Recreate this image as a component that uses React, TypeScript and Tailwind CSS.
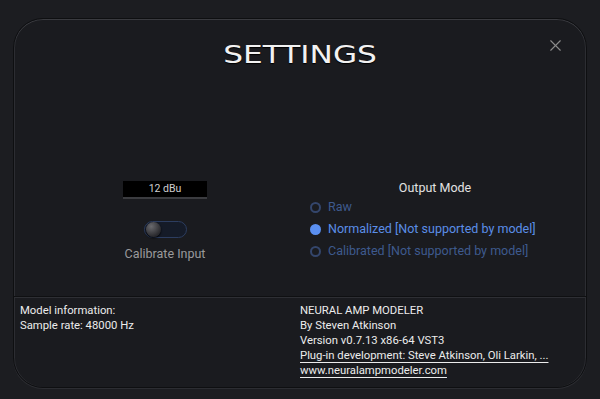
import { X } from 'lucide-react'

const options = [
  { label: 'Raw', active: false },
  { label: 'Normalized [Not supported by model]', active: true },
  { label: 'Calibrated [Not supported by model]', active: false },
]

export default function App() {
  return (
    <div className="w-[600px] h-[399px] bg-[#1c1d21] pt-[18px] px-[13px] pb-[11px] font-['Roboto',sans-serif]">
      <div className="relative h-full flex flex-col rounded-[30px] border border-[#0e0f11] bg-[#1a1b1f] shadow-[inset_0_1px_0_#3a3b40,inset_1px_0_0_#2c2d32,inset_-1px_0_0_#2c2d32,0_1px_0_#2c2d32]">
        <div className="h-[70px] pt-[24px] flex justify-center">
          <h1 className="text-[24px] leading-none text-[#f2f2f2] scale-x-[1.3] font-['DejaVu_Sans',sans-serif] [text-shadow:0_1px_1px_#000]">SETTINGS</h1>
        </div>
        <button className="absolute right-[21px] top-[17px] text-[#8c8c8c]">
          <X size={19} strokeWidth={1.4} />
        </button>

        <div className="flex-1 flex">
          <div className="w-[284px] pl-[18px] pt-[92px] flex flex-col items-center">
            <div className="w-[84px] h-[18px] bg-black border-b-2 border-[#3b3c40] flex items-center justify-center text-[10.5px] text-[#cfcfcf]">12 dBu</div>
            <div className="mt-[22px] w-[43px] h-[17px] rounded-full bg-[#151b28] border border-[#2c3d60] flex items-center px-[1px]">
              <div className="w-[15px] h-[15px] rounded-full bg-[radial-gradient(circle_at_35%_30%,#6a6a6e,#2a2a2e_70%)] shadow-[0_1px_2px_#000]" />
            </div>
            <p className="mt-[7px] text-[12.5px] text-[#9a9a9c]">Calibrate Input</p>
          </div>
          <div className="flex-1 pt-[91px]">
            <p className="text-center pr-[14px] text-[12.5px] leading-[16px] text-[#e2e2e2]">Output Mode</p>
            <div className="pl-[12px] flex flex-col">
              {options.map(o => (
                <div key={o.label} className="h-[22px] flex items-center gap-[7px]">
                  {o.active
                    ? <span className="w-[11px] h-[11px] rounded-full bg-[#5a8ff0]" />
                    : <span className="w-[11px] h-[11px] rounded-full border-2 border-[#34466c]" />}
                  <span className={`text-[12.5px] ${o.active ? 'text-[#5b8ee8]' : 'text-[#3e5a8e]'}`}>{o.label}</span>
                </div>
              ))}
            </div>
          </div>
        </div>

        <div className="h-[91px] border-t border-[#0f1012] shadow-[inset_0_1px_0_#2e2f34] grid grid-cols-2 text-[11.3px] leading-[15px] text-[#ececec] pt-[6px]">
          <div className="pl-[6px]">
            <p>Model information:</p>
            <p>Sample rate: 48000 Hz</p>
          </div>
          <div>
            <p>NEURAL AMP MODELER</p>
            <p>By Steven Atkinson</p>
            <p>Version v0.7.13 x86-64 VST3</p>
            <p className="underline underline-offset-[3px]">Plug-in development: Steve Atkinson, Oli Larkin, ...</p>
            <p className="underline underline-offset-[3px]">www.neuralampmodeler.com</p>
          </div>
        </div>
      </div>
    </div>
  )
}
